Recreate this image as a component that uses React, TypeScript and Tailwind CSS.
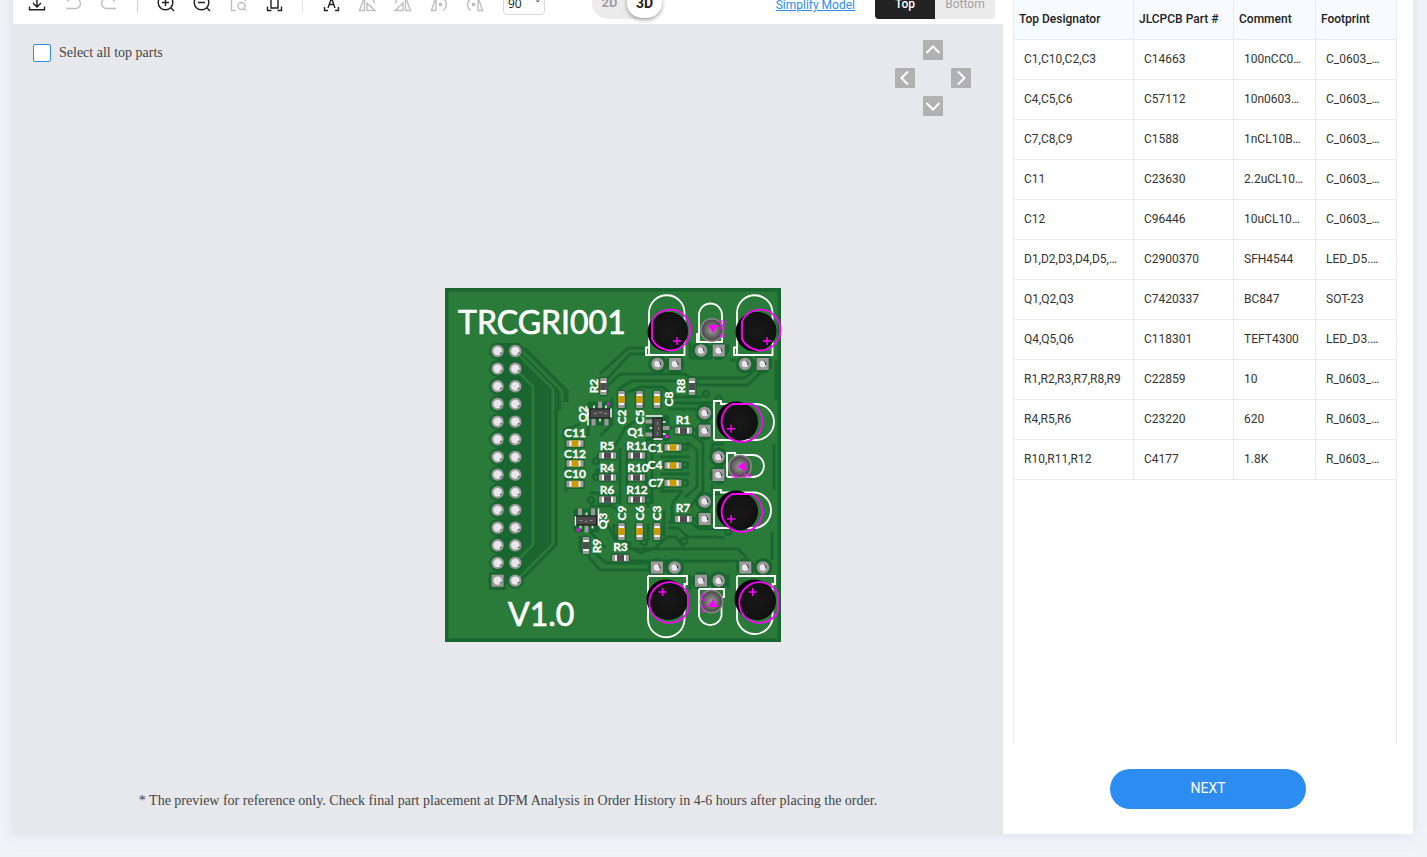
import React, { useState } from "react";

type Row = [string, string, string, string];

const rows: Row[] = [
  ["C1,C10,C2,C3", "C14663", "100nCC0…", "C_0603_…"],
  ["C4,C5,C6", "C57112", "10n0603…", "C_0603_…"],
  ["C7,C8,C9", "C1588", "1nCL10B…", "C_0603_…"],
  ["C11", "C23630", "2.2uCL10…", "C_0603_…"],
  ["C12", "C96446", "10uCL10…", "C_0603_…"],
  ["D1,D2,D3,D4,D5,…", "C2900370", "SFH4544", "LED_D5.…"],
  ["Q1,Q2,Q3", "C7420337", "BC847", "SOT-23"],
  ["Q4,Q5,Q6", "C118301", "TEFT4300", "LED_D3.…"],
  ["R1,R2,R3,R7,R8,R9", "C22859", "10", "R_0603_…"],
  ["R4,R5,R6", "C23220", "620", "R_0603_…"],
  ["R10,R11,R12", "C4177", "1.8K", "R_0603_…"],
];

/* ---------- toolbar ---------- */

function Tool({ label, muted, children }: { label: string; muted?: boolean; children: React.ReactNode }) {
  return (
    <button
      type="button"
      aria-label={label}
      className={`flex h-8 w-9 shrink-0 items-center justify-center ${muted ? "text-[#bfbfbf]" : "text-[#1f1f1f]"}`}
    >
      <svg width="20" height="20" viewBox="0 0 20 20" fill="none" stroke="currentColor" strokeWidth="1.4">
        {children}
      </svg>
    </button>
  );
}

function Divider({ faint }: { faint?: boolean }) {
  return <span className={`mx-[10px] h-5 w-px shrink-0 ${faint ? "bg-[#dedede]" : "bg-[#d4d4d4]"}`} />;
}

function Toolbar() {
  return (
    <div className="flex h-[42px] items-center bg-white pr-2 pl-[6px]">
      <Tool label="Download">
        <path d="M2.500 13.500v3.200h15v-3.200M10 2v11.500M6 10l4 4 4-4" />
      </Tool>
      <Tool label="Undo" muted>
        <path d="M3 15.500h9.500a5 5 0 0 0 0-10H3M6 2.500l-3 3 3 3" />
      </Tool>
      <Tool label="Redo" muted>
        <path d="M17 15.500H7.500a5 5 0 0 1 0-10H17M14 2.500l3 3-3 3" />
      </Tool>
      <Divider />
      <Tool label="Zoom in">
        <circle cx="9.500" cy="9.500" r="7.300" />
        <path d="M15 15l3 3M6 9.500h7M9.500 6v7" />
      </Tool>
      <Tool label="Zoom out">
        <circle cx="9.500" cy="9.500" r="7.300" />
        <path d="M15 15l3 3M6 9.500h7" />
      </Tool>
      <Tool label="Find part" muted>
        <path d="M8 17.500H3.500V2.500h14v6" />
        <circle cx="13.500" cy="13" r="3.500" />
        <path d="M16 15.500l2 2" />
      </Tool>
      <Tool label="Fit to screen">
        <path d="M3.500 13.500v4h4M17.500 13.500v4h-4M3.500 6.500v-4h4M17.500 6.500v-4h-4M7 6h7v9H7z" />
      </Tool>
      <Divider faint />
      <Tool label="Designators">
        <path d="M3.500 14v3.500h3.500M17.500 14v3.500H14M7 15l3.500-10L14 15M8.200 11.500h4.700" />
      </Tool>
      <Tool label="Rotate left" muted>
        <path d="M2.500 17.500L7.500 4v13.500zM10 10l8 7.500h-8zM11 4c3.500.5 6 3 6.500 6.500" />
      </Tool>
      <Tool label="Rotate right" muted>
        <path d="M17.500 17.500L12.500 4v13.500zM10 10l-8 7.500h8zM9 4c-3.500.5-6 3-6.500 6.500" />
      </Tool>
      <Tool label="Flip right" muted>
        <path d="M2.500 17.500L7 4v13.500zM14 5.500c4.500 3 4.500 9 0 12" />
        <circle cx="11.500" cy="11.500" r="1.200" fill="currentColor" />
      </Tool>
      <Tool label="Flip left" muted>
        <path d="M17.500 17.500L13 4v13.500zM6 5.500c-4.500 3-4.500 9 0 12" />
        <circle cx="8.500" cy="11.500" r="1.200" fill="currentColor" />
      </Tool>
      <label className="ml-[10px] flex h-6 w-[42px] shrink-0 items-center rounded-sm border border-[#d9d9d9] bg-white px-1">
        <input
          aria-label="Rotation angle"
          defaultValue="90"
          className="w-6 min-w-0 pt-[2px] font-['Open_Sans',sans-serif] text-xs text-[#222] outline-none"
        />
        <span className="ml-auto pt-[2px] text-xs text-[#444]">°</span>
      </label>
      <div className="ml-[47px] flex h-8 shrink-0 items-center rounded-full bg-[#ececec] text-[13px] font-bold">
        <button type="button" className="h-8 w-[35px] text-[#a0a0a0]">
          2D
        </button>
        <button
          type="button"
          className="h-[30px] w-[35px] rounded-full bg-white text-sm text-[#222] shadow-[0_2px_4px_rgba(0,0,0,0.35)]"
        >
          3D
        </button>
      </div>
      <a href="#simplify" className="mr-5 ml-auto pt-1 text-xs whitespace-nowrap text-[#2d8cf0] underline">
        Simplify Model
      </a>
      <div className="flex h-8 shrink-0 overflow-hidden rounded-sm text-xs">
        <button type="button" className="w-[60px] bg-[#222] pt-[2px] font-medium text-white">
          Top
        </button>
        <button type="button" className="w-[60px] bg-[#ececec] pt-[2px] text-[#a3a3a3]">
          Bottom
        </button>
      </div>
    </div>
  );
}

/* ---------- circuit board ---------- */

const DARK = "#196630";
const LIGHT = "#2a7a3a";
const PAD = "#9d999b";
const HOLE = "#e6e8ec";
const PINK = "#ff00ff";

type XY = [number, number];

const headerPins: XY[] = Array.from({ length: 14 }, (_, i) => 351 + i * 17.66).flatMap(
  (y): XY[] => [[497.6, y], [515.3, y]],
);

const roundPads: XY[] = [
  [657.5, 364], [745, 364], [701, 350.5], [704.7, 413], [718.5, 457],
  [704.7, 501.5], [674.7, 567.5], [763, 567.5], [718.7, 580.7],
];
const squarePads: XY[] = [
  [675, 364], [762.7, 364], [718.7, 350.5], [704.7, 430.7], [718.5, 475],
  [704.7, 519], [657, 567.5], [745.3, 567.5], [701, 580.7], [497.6, 580.7],
];
const vias: XY[] = [
  [706, 394], [719, 399], [684, 541], [728, 532], [596, 477], [591, 500], [648, 500],
  [685, 447], [685, 465], [685, 483], [644, 542], [596, 461],
];

// x, y, vertical
type Chip = [number, number, boolean];
const resistors: Chip[] = [
  [607.5, 455.5, false], [607.5, 477.5, false], [607.5, 499.5, false],
  [636.5, 455.5, false], [636.5, 477.5, false], [636.5, 499.5, false],
  [683.5, 430.5, false], [683.5, 519, false], [620.5, 558, false],
  [603.5, 386.5, true], [692, 386.5, true], [586, 545.5, true],
];
const capacitors: Chip[] = [
  [575, 443.5, false], [575, 463.5, false], [575, 484, false],
  [673, 447.5, false], [673, 465.5, false], [673, 483, false],
  [621.5, 399.5, true], [639.5, 399.5, true], [657, 399.5, true],
  [621.5, 531.5, true], [639.5, 531.5, true], [657, 531.5, true],
];

const labels: [string, number, number, boolean?][] = [
  ["C11", 575, 433], ["C12", 575, 453.5], ["C10", 575, 474],
  ["R5", 607, 446], ["R4", 607, 468], ["R6", 607, 490],
  ["R11", 637, 446], ["R10", 638, 468], ["R12", 637, 490],
  ["C1", 655.5, 448], ["C4", 655, 465], ["C7", 656, 483],
  ["Q1", 635.5, 432], ["R1", 683, 420], ["R7", 683, 508], ["R3", 620.5, 547],
  ["R2", 594, 386, true], ["C2", 621.5, 417, true], ["C5", 639.5, 417, true],
  ["C8", 668.5, 399, true], ["R8", 681, 386, true], ["Q2", 583, 414, true],
  ["Q3", 602.5, 521, true], ["R9", 597, 546, true], ["C9", 621.5, 513, true],
  ["C6", 639.5, 513, true], ["C3", 656.5, 513, true],
];

const gaps = [
  "M600 374L628 348H647M605 381L630 354H647",
  "M605 388L620 374H684L692 378H745L758 367",
  "M618 389L632 381H690L700 385H748L764 369",
  "M628 392L640 387H662L676 397H702M668 403H714M668 409H696",
  "M564 438V430L580 424M566 438V492M588 424V436M612 398V424L600 436",
  "M615 446L625 428L640 418M620 448V504M627 442V493M652 440V504M646 440V494",
  "M690 433L703 443V490L690 507M687 442L697 450V487L685 497M668 440V432L672 426",
  "M598 455V462M597 477V470H612M590 493H612M590 506H612L620 512M628 466H664M628 488H664M648 493V508",
  "M660 457H690M660 474H690M660 491H682L672 504V524M690 519H704M690 430H704",
  "M590 532L606 548M605 512V520L617 543M628 549H738L746 557M630 561H737L743 566",
  "M588 556L600 570H652M594 552L606 563H652M580 552V536",
  "M622 543L641 553L655 548L667 537H676L684 547",
  "M668 528H678L688 537H715L725 538M668 522H690L700 529H724",
  "M614 524V536L632 544M648 524V540M664 510V536",
  "M724 444H712V452M712 484V494H722M776 360V400M774 444V490M772 532V560",
  "M690 342V358H712M728 344V352M736 360H730M690 590V575M728 574V588",
];

const innerTracks = [
  "M515 351l38 38v155l-37 37",
  "M515 368.700l18 18v158l-18 18",
  "M522 351l40 40v10",
];

function ChipPart({ chip, body }: { chip: Chip; body: string }) {
  const [x, y, vertical] = chip;
  return (
    <g transform={`translate(${x} ${y})${vertical ? " rotate(90)" : ""}`}>
      <rect x="-10" y="-5" width="20" height="10" rx="3" fill={DARK} />
      <rect x="-8.5" y="-3.3" width="17" height="6.6" rx="1" fill={PAD} />
      <rect x="-5.5" y="-2.7" width="11" height="5.4" fill="#f3f3f3" />
      <rect x="-3.5" y="-3.3" width="7" height="6.6" fill={body} />
    </g>
  );
}

function Transistor({ x, y, turn }: { x: number; y: number; turn: number }) {
  return (
    <g transform={`translate(${x} ${y}) rotate(${turn})`}>
      <rect x="-13" y="-12" width="26" height="24" rx="3" fill={DARK} />
      <path d="M-2 -12h4v7h-4zM-8.5 5h4v7h-4zM4.5 5h4v7h-4z" fill={PAD} />
      <path d="M-7 -8h2v3h-2zM5 -8h2v3h-2zM-1 5h2v3h-2z" fill="#d0d0d0" />
      <rect x="-10" y="-4.5" width="20" height="9" fill="#4a4a4a" stroke="#171717" />
      <path d="M-6 0h3M-1 -1h3M4 0h3" stroke="#8a8a8a" />
      <path d="M-12 -5v17M11 -5v9" stroke="#fff" strokeWidth="1.5" />
      <rect x="7" y="-11" width="3" height="3" fill={PINK} />
    </g>
  );
}

interface LedSpec {
  outline: string;
  shadow: XY;
  body: XY;
  ring: string;
  plus: XY;
}

const leds: LedSpec[] = [
  {
    outline: "M649 355V313a17.700 17.700 0 0 1 35.500 0V355H646V347.500H649",
    shadow: [667, 332], body: [669, 331],
    ring: "M652 321V339A20.300 20.300 0 1 0 652 321",
    plus: [677, 341],
  },
  {
    outline: "M737 355V313a17.700 17.700 0 0 1 35.500 0V355H734V347.500H737",
    shadow: [755, 332], body: [757.5, 331],
    ring: "M742 321V339A20.300 20.300 0 1 0 742 321",
    plus: [767, 341],
  },
  {
    outline: "M714 440V401H721V404H756a18 18 0 0 1 0 36H714",
    shadow: [736, 421], body: [739, 422],
    ring: "M732 404H752A20.300 20.300 0 1 1 732 404",
    plus: [731, 428.7],
  },
  {
    outline: "M714 528V490H721V492.500H756a18 18 0 0 1 0 35.500H714",
    shadow: [736, 510], body: [739, 511.5],
    ring: "M732 494H752A20.300 20.300 0 1 1 732 494",
    plus: [731, 519],
  },
  {
    outline: "M648 576H687V584H684.500V619a18 18 0 0 1 -36.500 0V576",
    shadow: [666, 599], body: [668.5, 601],
    ring: "M688 594V611A20.300 20.300 0 1 1 688 594",
    plus: [662.5, 592],
  },
  {
    outline: "M737 576H775V584H772.500V619a18 18 0 0 1 -35.500 0V576",
    shadow: [754, 599], body: [757, 601],
    ring: "M778 594V611A20.300 20.300 0 1 1 778 594",
    plus: [752.7, 592],
  },
];

const sensors: { outline: string; at: XY; mark: string; tag: string }[] = [
  {
    outline: "M699 342V315a11.500 11.500 0 0 1 23 0V342H697V333",
    at: [712, 330],
    mark: "M708 325h10l-5 8z",
    tag: "M721 321h4v5h-4zM721 326v3h4M721 333v4h3v-4",
  },
  {
    outline: "M727 477V453H735V455H753a11 11 0 0 1 0 22H727",
    at: [740, 466.5],
    mark: "M745.500 461.500v10l-8-5z",
    tag: "M733 473v4h5v-4M745 473v4h5v-4M745 475h5",
  },
  {
    outline: "M699 589H724V597H721.500V616a11.500 11.500 0 0 1 -22.500 0V589",
    at: [711.5, 601.5],
    mark: "M708 607h10l-5 -8z",
    tag: "M706 594h-4v6h4M706 606h-4v6h4",
  },
];

function Board() {
  return (
    <svg
      width="336"
      height="354"
      viewBox="445 288 336 354"
      role="img"
      aria-label="Board preview"
      className="absolute top-[264px] left-[432px] overflow-visible"
    >
      <defs>
        <radialGradient id="lens">
          <stop offset="0" stopColor="#a0a0a0" />
          <stop offset="1" stopColor="#484848" />
        </radialGradient>
        <radialGradient id="cap">
          <stop offset="0" stopColor="#191919" />
          <stop offset="0.9" stopColor="#121212" />
          <stop offset="1" stopColor="#0a0a0a" />
        </radialGradient>
      </defs>
      <rect x="445" y="288" width="336" height="354" fill={DARK} />
      <rect x="448.5" y="291.5" width="329" height="347" fill={LIGHT} />

      <path d="M497 343h22l39 40v162l-38 38h-23z" fill={DARK} />
      {headerPins.map(([x, y]) => (
        <circle key={`${x}-${y}`} cx={x} cy={y} r="8.5" fill={DARK} />
      ))}
      <path d="M491 574h13v14h-13z" fill={DARK} stroke={DARK} strokeWidth="4" />
      <path d="M522 350l42 42v10M555 392v14h6" fill="none" stroke={DARK} strokeWidth="9" />
      <g fill="none" stroke={LIGHT} strokeWidth="2.8">
        {innerTracks.map((d) => (
          <path key={d} d={d} />
        ))}
      </g>

      <g fill="none" stroke={DARK} strokeWidth="2.8" strokeLinejoin="round">
        {gaps.map((d) => (
          <path key={d} d={d} />
        ))}
      </g>
      {vias.map(([x, y]) => (
        <circle key={`${x}-${y}`} cx={x} cy={y} r="3" fill={LIGHT} stroke={DARK} strokeWidth="2.5" />
      ))}

      {roundPads.concat(squarePads).map(([x, y]) => (
        <circle key={`${x}-${y}`} cx={x} cy={y} r="9.5" fill={DARK} />
      ))}
      {headerPins.slice(0, 26).concat(headerPins.slice(27), roundPads).map(([x, y]) => (
        <circle key={`${x}-${y}`} cx={x} cy={y} r="6.2" fill={PAD} />
      ))}
      {squarePads.map(([x, y]) => (
        <rect key={`${x}-${y}`} x={x - 6} y={y - 6} width="12" height="12" fill={PAD} />
      ))}
      {headerPins.concat(roundPads, squarePads.slice(0, 9)).map(([x, y], i) => (
        <g key={`${x}-${y}`}>
          <circle cx={x} cy={y} r={i < 28 ? 4.2 : 3.3} fill={HOLE} />
          <path
            d={i < 28 ? `M${x + 2.5} ${y + 2.8}l1.2 -1.4` : `M${x + 1} ${y - 3}q2.500 1 2 4`}
            fill="none"
            stroke="#222"
            strokeWidth="1"
          />
        </g>
      ))}

      {resistors.map((c) => (
        <ChipPart key={c.join()} chip={c} body="#4d4d4d" />
      ))}
      {capacitors.map((c) => (
        <ChipPart key={c.join()} chip={c} body="#c89b08" />
      ))}
      <Transistor x={600} y={413.5} turn={0} />
      <Transistor x={586.5} y={520.5} turn={180} />
      <Transistor x={657.5} y={428} turn={90} />

      {leds.map((led) => (
        <g key={led.outline} fill="none">
          <path d={led.outline} stroke="#fff" strokeWidth="1.8" />
          <circle cx={led.shadow[0]} cy={led.shadow[1]} r="19.5" fill="#050505" />
          <circle cx={led.body[0]} cy={led.body[1]} r="19" fill="url(#cap)" />
          <path d={led.ring} stroke={PINK} strokeWidth="1.8" />
          <path
            d={`M${led.plus[0] - 4} ${led.plus[1]}h8M${led.plus[0]} ${led.plus[1] - 4}v8`}
            stroke={PINK}
            strokeWidth="1.5"
          />
        </g>
      ))}
      {sensors.map((s) => (
        <g key={s.outline} fill="none">
          <path d={s.outline} stroke="#fff" strokeWidth="1.8" />
          <circle cx={s.at[0]} cy={s.at[1]} r="12" fill="#8b8789" />
          <circle cx={s.at[0]} cy={s.at[1]} r="10.5" fill="url(#lens)" />
          <path d={s.mark} fill={PINK} />
          <path d={s.tag} stroke={PINK} strokeWidth="1.2" />
        </g>
      ))}

      <g fill="#fff" stroke="#fff" className="font-['Lato',sans-serif]">
        <g className="text-[12px] font-bold" strokeWidth="0.3" textAnchor="middle">
          {labels.map(([text, x, y, turned]) => (
            <text key={text} transform={`translate(${x} ${y})${turned ? " rotate(-90)" : ""}`} y="4">
              {text}
            </text>
          ))}
        </g>
        <g className="text-[32px]" strokeWidth="0.7">
          <text x="458" y="334">
            TRCGRI001
          </text>
          <text x="508" y="626">
            V1.0
          </text>
        </g>
      </g>
    </svg>
  );
}

/* ---------- preview ---------- */

function Arrow({ label, d, cell }: { label: string; d: string; cell: string }) {
  return (
    <button type="button" aria-label={label} className={`size-5 rounded-[1px] bg-[#b1b1b1] ${cell}`}>
      <svg width="20" height="20" viewBox="0 0 20 20" fill="none" stroke="#fff" strokeWidth="2">
        <path d={d} />
      </svg>
    </button>
  );
}

function Preview() {
  const [all, setAll] = useState(false);
  return (
    <div className="relative flex flex-1 flex-col justify-between bg-[#e7e8ec] font-['Liberation_Serif',serif] text-sm text-[#444]">
      <div className="flex items-start justify-between pt-4 pr-8 pl-5">
        <label className="mt-[3px] flex items-center gap-2">
          <input
            type="checkbox"
            checked={all}
            onChange={(e) => setAll(e.target.checked)}
            className="size-[18px] appearance-none rounded-xs border border-[#2d8cf0] bg-white checked:bg-[#2d8cf0]"
          />
          Select all top parts
        </label>
        <div className="grid grid-cols-3 gap-2">
          <Arrow label="Move up" d="M3.500 13L10 6.500l6.500 6.500" cell="col-start-2" />
          <Arrow label="Move left" d="M13 3.500L6.500 10l6.500 6.500" cell="col-start-1 row-start-2" />
          <Arrow label="Move right" d="M7 3.500l6.500 6.500L7 16.500" cell="col-start-3 row-start-2" />
          <Arrow label="Move down" d="M3.500 7l6.500 6.500L16.500 7" cell="col-start-2 row-start-3" />
        </div>
      </div>
      <Board />
      <p className="pb-[23px] text-center leading-5">
        * The preview for reference only. Check final part placement at DFM Analysis in Order History in 4-6 hours after
        placing the order.
      </p>
    </div>
  );
}

/* ---------- parts list ---------- */

function PartsPanel() {
  return (
    <aside className="flex w-[410px] shrink-0 flex-col bg-white pb-[25px]">
      <div className="mr-4 ml-[10px] flex-1 border-x border-[#e8eaec] bg-white pt-[18px]">
        <table className="w-full table-fixed border-separate border-spacing-0 text-left text-xs text-[#333]">
          <colgroup>
            <col className="w-[120px]" />
            <col className="w-[100px]" />
            <col className="w-[82px]" />
            <col />
          </colgroup>
          <thead>
            <tr className="h-10 bg-[#f7faff] text-[#222]">
              {["Top Designator", "JLCPCB Part #", "Comment", "Footprint"].map((h) => (
                <th
                  key={h}
                  className="border-r border-b border-[#e8eaec] px-[5px] pb-[2px] font-medium whitespace-nowrap last:border-r-0"
                >
                  {h}
                </th>
              ))}
            </tr>
          </thead>
          <tbody>
            {rows.map((row) => (
              <tr key={row[0]} className="h-10">
                {row.map((cell, i) => (
                  <td
                    key={i}
                    className="border-r border-b border-[#e8eaec] pb-[2px] pl-[10px] whitespace-nowrap last:border-r-0"
                  >
                    {cell}
                  </td>
                ))}
              </tr>
            ))}
          </tbody>
        </table>
      </div>
      <button
        type="button"
        className="mx-auto mt-[25px] h-10 w-[196px] rounded-full bg-[#2d8cf0] pb-[2px] text-sm text-white"
      >
        NEXT
      </button>
    </aside>
  );
}

export default function App() {
  return (
    <div className="flex h-screen flex-col overflow-hidden bg-[#f1f3f7] font-['Roboto',sans-serif]">
      <main className="mr-[14px] -mt-[18px] mb-[23px] ml-[13px] flex flex-1 shadow-[0_0_12px_rgba(200,208,225,0.6)]">
        <section className="flex min-w-0 flex-1 flex-col">
          <Toolbar />
          <Preview />
        </section>
        <PartsPanel />
      </main>
    </div>
  );
}
